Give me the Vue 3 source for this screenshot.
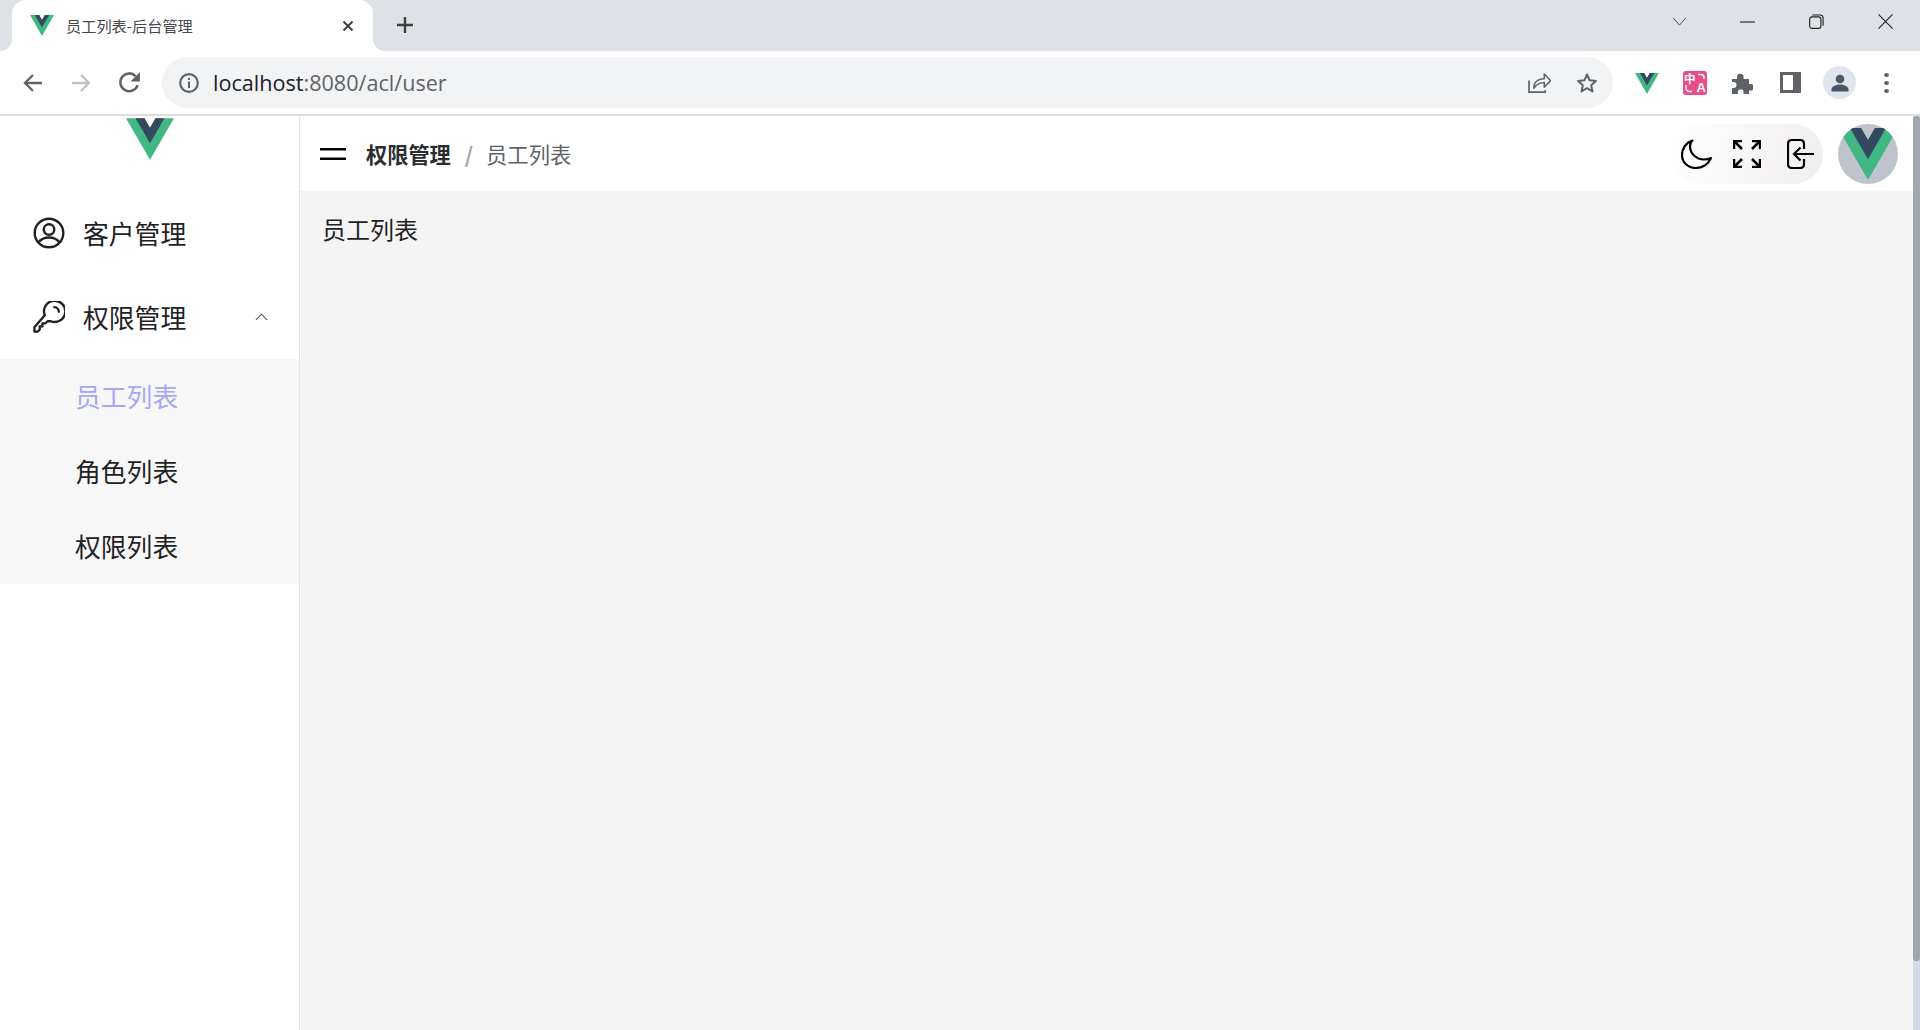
<script setup>
const subItems = [
  { label: '员工列表', active: true },
  { label: '角色列表', active: false },
  { label: '权限列表', active: false },
]
</script>

<template>
  <div class="window">
    <div class="tabstrip">
      <div class="tab">
        <svg class="favicon" viewBox="0 0 261.76 226.69"><path fill="#41b883" d="M161.096.001l-30.225 52.351L100.647.001H-.005l130.876 226.688L261.749.001z"/><path fill="#34495e" d="M161.096.001l-30.225 52.351L100.647.001H52.346l78.525 136.01L209.398.001z"/></svg>
        <span class="tab-title">员工列表-后台管理</span>
        <svg class="tab-close" viewBox="0 0 12 12"><path d="M1.500 1.500l9 9M10.500 1.500l-9 9" stroke="#3c4043" stroke-width="2" fill="none"/></svg>
      </div>
      <svg class="new-tab" viewBox="0 0 18 18"><path d="M9 1v16M1 9h16" stroke="#3c4043" stroke-width="2.400" fill="none"/></svg>
      <div class="spacer"></div>
      <svg class="win-btn chev" viewBox="0 0 16 10"><path d="M1 1l7 8 7-8" stroke="#3c4043" stroke-width="1" fill="none"/></svg>
      <svg class="win-btn min" viewBox="0 0 16 2"><path d="M0 1h16" stroke="#202124" stroke-width="1.200"/></svg>
      <svg class="win-btn restore" viewBox="0 0 16 16"><rect x="0.700" y="3" width="12" height="12.300" rx="2.500" fill="none" stroke="#202124" stroke-width="1.200"/><path d="M3.500 1h8.500a3 3 0 0 1 3 3v8.500" fill="none" stroke="#202124" stroke-width="1.200"/></svg>
      <svg class="win-btn close" viewBox="0 0 16 16"><path d="M.5.500l15 15M15.500.500l-15 15" stroke="#202124" stroke-width="1.200" fill="none"/></svg>
    </div>

    <div class="toolbar">
      <svg class="nav" viewBox="0 0 20 20"><path d="M19 10H2M10 2l-8 8 8 8" fill="none" stroke="#5f6368" stroke-width="2.300"/></svg>
      <svg class="nav" viewBox="0 0 20 20"><path d="M1 10h17M10 2l8 8-8 8" fill="none" stroke="#bdc1c6" stroke-width="2.300"/></svg>
      <svg class="nav reload" viewBox="0 0 22 22"><path d="M18.800 13.500A8.500 8.500 0 1 1 16.800 4.800" fill="none" stroke="#5f6368" stroke-width="2.400"/><path d="M21 1v9h-9z" fill="#5f6368"/></svg>
      <div class="omnibox">
        <svg class="info" viewBox="0 0 20 20"><circle cx="10" cy="10" r="8.800" fill="none" stroke="#5f6368" stroke-width="2.200"/><rect x="9" y="8.500" width="2" height="6.500" fill="#5f6368"/><rect x="9" y="5" width="2" height="2" fill="#5f6368"/></svg>
        <span class="url"><span class="host">localhost</span>:8080/acl/user</span>
        <div class="spacer"></div>
        <svg class="share" viewBox="0 0 24 22"><path d="M1 9v12h17v-2" fill="none" stroke="#5f6368" stroke-width="1.800"/><path d="M6 17c0-6 4-10 11-10V2l6.500 7-6.500 7v-5c-5 0-8 2-11 6z" fill="none" stroke="#5f6368" stroke-width="1.600" stroke-linejoin="round"/></svg>
        <svg class="star" viewBox="0 0 22 22"><path d="M11 2.500l2.600 5.800 6.300.7-4.700 4.200 1.300 6.200L11 16.200l-5.500 3.200 1.300-6.200L2.100 9l6.300-.7z" fill="none" stroke="#5f6368" stroke-width="2" stroke-linejoin="round"/></svg>
      </div>
      <div class="ext-group">
        <svg class="ext-vue" viewBox="0 0 261.76 226.69"><path fill="#41b883" d="M161.096.001l-30.225 52.351L100.647.001H-.005l130.876 226.688L261.749.001z"/><path fill="#34495e" d="M161.096.001l-30.225 52.351L100.647.001H52.346l78.525 136.01L209.398.001z"/></svg>
        <div class="ext-translate">
          <span class="zh">中</span>
          <span class="la">A</span>
          <svg class="arcs" viewBox="0 0 24 24"><path d="M15 3.500h3a3 3 0 0 1 3 3v1.500M3 14v3a3.500 3.500 0 0 0 3.500 3.500H9" fill="none" stroke="#fff" stroke-width="1.500"/></svg>
        </div>
        <svg class="ext-puzzle" viewBox="0 0 22 22"><path d="M1 7h5V5a3.300 3.300 0 0 1 6.600 0v2h5.400v5h1.500a3.300 3.300 0 0 1 0 6.600H18V22h-5.500v-2a2.800 2.800 0 0 0-5.600 0v2H1v-6h1.500a3 3 0 0 0 0-6H1z" fill="#5f6368"/></svg>
        <div class="ext-panel"><div class="ext-panel-inner"></div></div>
        <div class="ext-avatar">
          <svg viewBox="0 0 20 20"><circle cx="10" cy="6" r="4.300" fill="#4a5568"/><path d="M1.500 18.500v-2c0-3.500 5-5 8.500-5s8.500 1.500 8.500 5v2z" fill="#4a5568"/></svg>
        </div>
        <div class="ext-menu"><i></i><i></i><i></i></div>
      </div>
    </div>

    <div class="page">
      <aside class="sidebar">
        <div class="logo">
          <svg viewBox="0 0 261.76 226.69"><path fill="#41b883" d="M161.096.001l-30.225 52.351L100.647.001H-.005l130.876 226.688L261.749.001z"/><path fill="#34495e" d="M161.096.001l-30.225 52.351L100.647.001H52.346l78.525 136.01L209.398.001z"/></svg>
        </div>
        <div class="menu-row">
          <svg class="menu-icon" viewBox="0 0 32 32"><circle cx="16" cy="16" r="14.300" fill="none" stroke="#1f2225" stroke-width="2.400"/><circle cx="16" cy="12.500" r="5.300" fill="none" stroke="#1f2225" stroke-width="2.400"/><path d="M5.500 25.500c2.500-3.500 6.500-5 10.500-5s8 1.500 10.500 5" fill="none" stroke="#1f2225" stroke-width="2.400"/></svg>
          <span>客户管理</span>
        </div>
        <div class="menu-row">
          <svg class="menu-icon" viewBox="0 0 34 34"><path d="M12.500 15.200A11.300 11.300 0 1 1 18.800 21.500l-3.300 0-2.300 2.300h-3.200v3.200H7.200v3.300L5 32.500H1.500v-4.500z" fill="none" stroke="#1f2225" stroke-width="2.500" stroke-linejoin="round"/><path d="M22.500 6.500a5 5 0 0 1 5 5" fill="none" stroke="#1f2225" stroke-width="2.400" stroke-linecap="round"/></svg>
          <span>权限管理</span>
          <svg class="chevron" viewBox="0 0 14 8"><path d="M1 7l6-6 6 6" fill="none" stroke="#4a4d52" stroke-width="1.100"/></svg>
        </div>
        <div class="submenu">
          <div v-for="item in subItems" :key="item.label" class="sub-row" :class="{ active: item.active }">{{ item.label }}</div>
        </div>
      </aside>

      <div class="main">
        <header class="topbar">
          <svg class="hamburger" viewBox="0 0 26 12"><path d="M0 1.200h26M0 10.800h26" stroke="#000" stroke-width="2.400"/></svg>
          <span class="crumb-strong">权限管理</span>
          <span class="crumb-sep">/</span>
          <span class="crumb">员工列表</span>
          <div class="spacer"></div>
          <div class="pill">
            <svg class="moon" viewBox="0 0 31 30"><path d="M11.500 1.500C5 3.500 1 9.500 1 16c0 7.500 6 13 13.500 13C21.500 29 27.500 25 30 19c-2 1-5 1.500-7 1.500-8 0-14-6-14-13.500 0-2 .800-4 2.500-5.500z" fill="none" stroke="#000" stroke-width="2.200" stroke-linejoin="round"/></svg>
            <svg class="expand" viewBox="0 0 28 28"><path d="M1 9V1h8M19 1h8v8M27 19v8h-8M9 27H1v-8" fill="none" stroke="#000" stroke-width="2.500"/><path d="M1.500 1.500l7.500 7.500M26.500 1.500L19 9M26.500 26.500L19 19M1.500 26.500L9 19" fill="none" stroke="#000" stroke-width="2.500"/></svg>
            <svg class="exit" viewBox="0 0 28 30"><path d="M17 10V5c0-2.500-1.500-4-4-4H5C2.500 1 1 2.500 1 5v20c0 2.500 1.500 4 4 4h8c2.500 0 4-1.500 4-4v-5" fill="none" stroke="#000" stroke-width="2.200"/><path d="M27 15H7M13.500 8.500L7 15l6.500 6.500" fill="none" stroke="#000" stroke-width="2.200"/></svg>
          </div>
          <div class="avatar">
            <svg viewBox="0 0 261.76 226.69"><path fill="#41b883" d="M161.096.001l-30.225 52.351L100.647.001H-.005l130.876 226.688L261.749.001z"/><path fill="#34495e" d="M161.096.001l-30.225 52.351L100.647.001H52.346l78.525 136.01L209.398.001z"/></svg>
          </div>
        </header>
        <div class="content">员工列表</div>
      </div>

      <div class="scrollbar"><div class="thumb"></div></div>
    </div>
  </div>
</template>

<style>
html, body { margin: 0; padding: 0; overflow: hidden; }
</style>

<style scoped>
.window {
  width: 1920px;
  height: 1030px;
  display: flex;
  flex-direction: column;
  overflow: hidden;
  background: #fff;
  font-family: "Noto Sans CJK SC", "Noto Sans", sans-serif;
  color: #1f2225;
}
.spacer { flex: 1; }

.tabstrip {
  height: 51px;
  flex: none;
  background: #dee1e6;
  display: flex;
  align-items: flex-start;
}
.tab {
  position: relative;
  margin-left: 12px;
  width: 361px;
  height: 51px;
  box-sizing: border-box;
  background: #fff;
  border-radius: 14px 14px 0 0;
  display: flex;
  align-items: center;
  padding-left: 18px;
}
.tab::before,
.tab::after {
  content: "";
  position: absolute;
  bottom: 0;
  width: 12px;
  height: 12px;
}
.tab::before { left: -12px; background: radial-gradient(circle at 0 0, #dee1e6 11.500px, #fff 12.500px); }
.tab::after { right: -12px; background: radial-gradient(circle at 100% 0, #dee1e6 11.500px, #fff 12.500px); }
.favicon { width: 24px; height: 21px; }
.tab-title {
  margin-left: 12px;
  margin-top: -2px;
  font-size: 15.200px;
  color: #45484d;
  width: 272px;
  white-space: nowrap;
}
.tab-close { width: 12px; height: 12px; margin-left: 4px; }
.new-tab { width: 18px; height: 18px; margin: 16px 0 0 23px; }
.win-btn { flex: none; }
.chev { width: 15px; height: 9px; margin: 17px 53px 0 0; }
.min { width: 15px; height: 2px; margin: 21px 54px 0 0; }
.restore { width: 15px; height: 15px; margin: 14px 54px 0 0; }
.close { width: 15px; height: 15px; margin: 14px 27px 0 0; }

.toolbar {
  height: 65px;
  flex: none;
  box-sizing: border-box;
  background: #fff;
  border-bottom: 2px solid #dcdee1;
  display: flex;
  align-items: center;
  padding-left: 23px;
}
.nav { width: 20px; height: 20px; margin-right: 28px; flex: none; }
.reload { width: 23px; height: 23px; margin-right: 25px; margin-left: -1px; }
.omnibox {
  margin-left: -4px;
  width: 1451px;
  height: 51px;
  box-sizing: border-box;
  background: #f1f3f4;
  border-radius: 26px;
  display: flex;
  align-items: center;
  padding-left: 17px;
}
.info { width: 20px; height: 20px; }
.url {
  margin-left: 14px;
  font-family: "Open Sans", sans-serif;
  font-size: 21.600px;
  color: #5f6368;
  white-space: nowrap;
}
.host { color: #202124; }
.share { width: 23px; height: 21px; margin-right: 25px; }
.star { width: 22px; height: 22px; margin-right: 15px; }
.ext-group { display: flex; align-items: center; flex: none; }
.ext-vue { width: 24px; height: 21px; margin-left: 22px; margin-top: 2px; }
.ext-translate {
  position: relative;
  width: 24px;
  height: 24px;
  margin-left: 24px;
  background: #eb4c89;
  border-radius: 3px;
  color: #fff;
}
.zh { position: absolute; left: 1px; top: 0; font-size: 11.500px; line-height: 14px; font-weight: 700; }
.la { position: absolute; right: 1px; bottom: 0; font-size: 13px; line-height: 14px; font-weight: 700; font-family: "Liberation Sans", sans-serif; }
.arcs { position: absolute; inset: 0; width: 24px; height: 24px; }
.ext-puzzle { width: 22px; height: 22px; margin-left: 24px; }
.ext-panel {
  width: 21px;
  height: 21px;
  margin-left: 27px;
  box-sizing: border-box;
  background: #5f6368;
  padding: 3px 8px 3px 3px;
}
.ext-panel-inner { width: 100%; height: 100%; background: #fff; }
.ext-avatar {
  width: 33px;
  height: 33px;
  margin-left: 22px;
  border-radius: 50%;
  background: #e1e4ea;
  display: flex;
  align-items: center;
  justify-content: center;
}
.ext-avatar svg { width: 20px; height: 20px; }
.ext-menu { margin-left: 28px; display: flex; flex-direction: column; gap: 4px; }
.ext-menu i { display: block; width: 5px; height: 4px; border-radius: 50%; background: #5f6368; }

.page { flex: 1; min-height: 0; display: flex; }
.sidebar {
  width: 300px;
  flex: none;
  box-sizing: border-box;
  border-right: 1px solid #e3e4e6;
  background: #fff;
  display: flex;
  flex-direction: column;
}
.logo { height: 75px; display: flex; justify-content: center; align-items: flex-start; padding-top: 2px; box-sizing: border-box; }
.logo svg { width: 48px; height: 42px; }
.menu-row {
  height: 84px;
  display: flex;
  align-items: center;
  padding-left: 33px;
  font-size: 25.800px;
  position: relative;
}
.menu-row span { margin-left: 18px; margin-top: -2px; }
.menu-icon { width: 32px; height: 32px; flex: none; }
.chevron { width: 13px; height: 8px; position: absolute; right: 31px; top: 38px; }
.submenu { background: #f7f7f7; }
.sub-row { height: 75px; box-sizing: border-box; padding: 0 0 2px 75px; display: flex; align-items: center; font-size: 25.800px; }
.sub-row.active { color: #a9a6f3; }

.main { flex: 1; min-width: 0; display: flex; flex-direction: column; background: #f4f4f5; }
.topbar {
  height: 75px;
  flex: none;
  box-sizing: border-box;
  background: #fff;
  display: flex;
  align-items: center;
  padding-left: 20px;
  padding-right: 15px;
}
.hamburger { width: 26px; height: 12px; flex: none; }
.crumb-strong { margin-left: 20px; font-size: 21.200px; font-weight: 700; color: #2b2d30; }
.crumb-sep { margin-left: 14px; font-size: 21.330px; color: #a0a3a8; font-weight: 700; }
.crumb { margin-left: 13px; font-size: 21.330px; color: #606266; }
.pill {
  width: 153px;
  height: 60px;
  box-sizing: border-box;
  border-radius: 30px;
  background: linear-gradient(110deg, #fff 0%, #f0eeed 100%);
  display: flex;
  align-items: center;
  padding-left: 11px;
}
.moon { width: 31px; height: 30px; flex: none; }
.expand { width: 28px; height: 28px; flex: none; margin-left: 21px; }
.exit { width: 28px; height: 30px; flex: none; margin-left: 26px; }
.avatar {
  width: 60px;
  height: 60px;
  margin-left: 15px;
  border-radius: 50%;
  background: #bfc3cc;
  overflow: hidden;
  display: flex;
  align-items: center;
  justify-content: center;
}
.avatar svg { width: 60px; height: 52px; flex: none; }
.content { padding: 20px 0 0 22px; font-size: 24px; line-height: 36px; }

.scrollbar { width: 7px; flex: none; background: #d3d9e5; }
.thumb { height: 845px; background: #a0a6ae; border-radius: 3px; }
</style>
